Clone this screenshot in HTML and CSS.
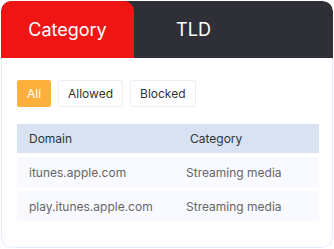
FILE: index.html
```html
<!DOCTYPE html>
<html>
<head>
    <title>Filter list</title>
    <link rel="stylesheet" href="styles.css">
</head>
<body>
    <div class="card">
        <div class="tabs">
            <div class="tab active">Category</div>
            <div class="tab">TLD</div>
        </div>
        <div class="content">
            <div class="filters">
                <button class="filter selected">All</button>
                <button class="filter">Allowed</button>
                <button class="filter">Blocked</button>
            </div>
            <table class="list">
                <thead>
                    <tr>
                        <th class="col-domain">Domain</th>
                        <th class="col-category">Category</th>
                    </tr>
                </thead>
                <tbody>
                    <tr>
                        <td>itunes.apple.com</td>
                        <td class="cat">Streaming media</td>
                    </tr>
                    <tr>
                        <td>play.itunes.apple.com</td>
                        <td class="cat">Streaming media</td>
                    </tr>
                </tbody>
            </table>
        </div>
    </div>
</body>
</html>
```

FILE: styles.css
```css
body {
    margin: 0;
    padding: 1px;
    font-family: Inter, "Noto Sans", sans-serif;
    background-color: #fff;
}
.card {
    width: 332px;
    height: 247px;
    box-sizing: border-box;
    border-radius: 10px;
    overflow: hidden;
    background-color: #fff;
    display: flex;
    flex-direction: column;
}
.tabs {
    display: flex;
    height: 57px;
    background-color: #2f3037;
    border-radius: 10px 10px 0 0;
}
.tab {
    display: flex;
    align-items: center;
    justify-content: center;
    color: #fff;
    font-size: 18px;
    width: 119px;
}
.tab.active {
    width: 133px;
    background-color: #ef1515;
    border-radius: 10px 10px 0 0;
}
.content {
    flex: 1;
    border: 1px solid #e1edfb;
    border-top: none;
    border-radius: 0 0 10px 10px;
    padding: 22px 13px 0 15px;
}
.filters {
    display: flex;
    gap: 7px;
    margin-bottom: 17px;
}
.filter {
    height: 27px;
    padding: 0 9px;
    font-family: inherit;
    font-size: 12px;
    color: #333;
    background-color: #fff;
    border: 1px solid #e9eef8;
    border-radius: 2px;
}
.filter.selected {
    width: 34px;
    padding: 0;
    background-color: #fdb03c;
    border-color: #fdb03c;
    color: #fff;
}
.list {
    width: 302px;
    border-collapse: separate;
    border-spacing: 0 4px;
    margin-top: -4px;
    font-size: 12px;
}
.list th {
    background-color: #d9e2f3;
    color: #333;
    font-weight: normal;
    text-align: left;
    height: 29px;
    padding: 0;
}
.list td {
    background-color: #f8faff;
    color: #666;
    height: 30px;
    padding: 0;
}
.col-domain {
    width: 157px;
}
.list th:first-child,
.list td:first-child {
    padding-left: 12px;
}
.list th.col-category {
    padding-left: 4px;
}
```
